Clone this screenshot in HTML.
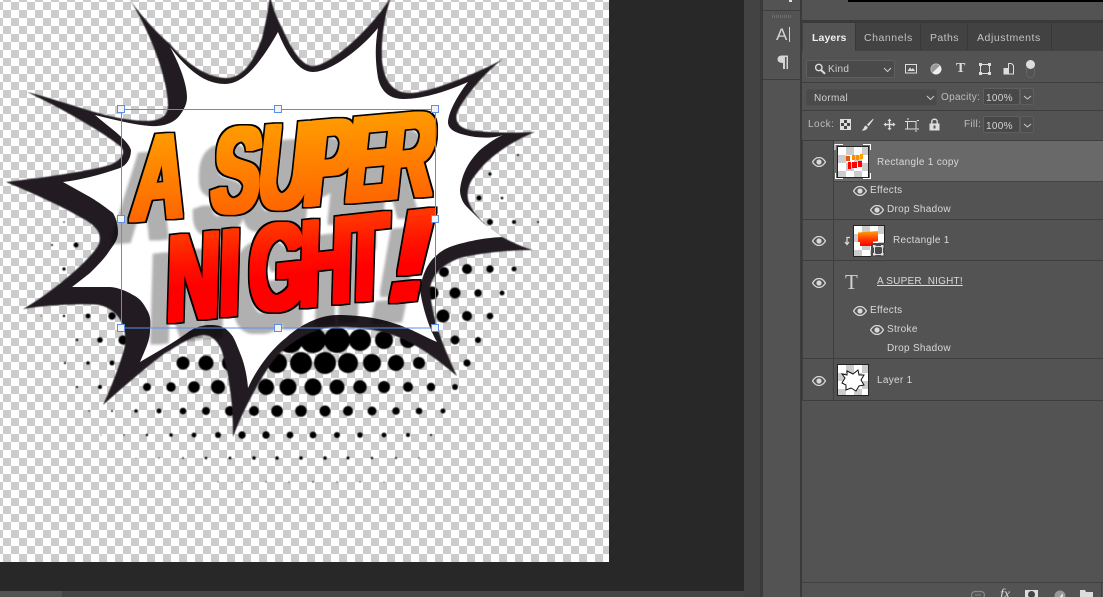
<!DOCTYPE html>
<html><head><meta charset="utf-8"><style>
html,body{margin:0;padding:0;width:1103px;height:597px;overflow:hidden;background:#282828}
body{position:relative;font-family:"Liberation Sans",sans-serif}
.a{position:absolute}
.t{position:absolute;font-size:10px;line-height:12px;letter-spacing:.3px;color:#d8d8d8;white-space:nowrap}
.tab{position:absolute;top:32px;font-size:10.5px;line-height:13px;letter-spacing:.55px;color:#c2c2c2;white-space:nowrap}
.hl{position:absolute;height:1px;background:#3e3e3e}
.box{position:absolute;background:#484848;border:1px solid #5e5e5e;box-sizing:border-box;border-radius:2px}
.chk{background-color:#fff;background-image:conic-gradient(#ccc 25%,#fff 25% 50%,#ccc 50% 75%,#fff 75%);background-size:16px 16px}
.th{position:absolute;border:1px solid #222;box-sizing:border-box}
.h{position:absolute;width:8px;height:8px;background:#f3f3f3;border:1px solid #5b8fe6;box-sizing:border-box}
svg{position:absolute;overflow:visible}
</style></head><body>
<div class="a" id="canvas" style="left:0;top:0;width:609px;height:562px;background-color:#fff;background-image:conic-gradient(#ccc 25%,#fff 25% 50%,#ccc 50% 75%,#fff 75%);background-size:16px 16px;background-position:3px 2px"></div>

<svg class="a" style="left:0;top:0" width="609" height="562" viewBox="0 0 609 562">
<defs>
<linearGradient id="g1" x1="0" y1="0" x2="0" y2="1"><stop offset="0" stop-color="#ffa800"/><stop offset="1" stop-color="#ff5500"/></linearGradient>
<linearGradient id="g2" x1="0" y1="0" x2="0" y2="1"><stop offset="0" stop-color="#ff5500"/><stop offset=".4" stop-color="#ff1000"/><stop offset=".55" stop-color="#ff0000"/><stop offset="1" stop-color="#ff0000"/></linearGradient>
<filter id="soft" x="-5%" y="-5%" width="110%" height="110%"><feGaussianBlur stdDeviation=".45"/></filter>
<filter id="fx" filterUnits="userSpaceOnUse" x="0" y="0" width="609" height="562" color-interpolation-filters="sRGB">
<feMorphology in="SourceGraphic" operator="dilate" radius="3.2 1.6" result="fat"/>
<feMorphology in="fat" operator="dilate" radius="1.3" result="d"/>
<feFlood flood-color="#000"/><feComposite in2="d" operator="in" result="outline"/>
<feOffset in="d" dx="-16" dy="20" result="o"/><feGaussianBlur in="o" stdDeviation="1.2" result="b"/>
<feFlood flood-color="#000" flood-opacity=".31"/><feComposite in2="b" operator="in" result="sh"/>
<feMerge><feMergeNode in="sh"/><feMergeNode in="outline"/><feMergeNode in="fat"/></feMerge>
</filter>
</defs>
<g fill="#000" filter="url(#soft)">
<circle cx="64" cy="222" r=".8"/><circle cx="52" cy="245" r="1"/><circle cx="76" cy="245" r="2.5"/><circle cx="64" cy="269" r="1.6"/>
<circle cx="41" cy="316" r=".5"/><circle cx="64" cy="316" r="1.2"/><circle cx="88" cy="316" r="2.4"/><circle cx="112" cy="316" r="3.7"/>
<circle cx="77" cy="340" r="1.2"/><circle cx="100" cy="340" r="2.8"/><circle cx="123" cy="340" r="4.6"/>
<circle cx="65" cy="363" r="1.1"/><circle cx="88" cy="363" r="1.7"/><circle cx="112" cy="363" r="2.5"/><circle cx="183" cy="363" r="6.5"/><circle cx="206" cy="363" r="7.5"/><circle cx="230" cy="363" r="8"/><circle cx="254" cy="363" r="9"/><circle cx="277" cy="363" r="10"/><circle cx="301" cy="363" r="11"/><circle cx="325" cy="363" r="11"/><circle cx="348" cy="363" r="10"/><circle cx="372" cy="363" r="9"/><circle cx="396" cy="363" r="8"/><circle cx="419" cy="363" r="6"/><circle cx="467" cy="363" r="3.6"/>
<circle cx="77" cy="387" r="1"/><circle cx="100" cy="387" r="2"/><circle cx="147" cy="387" r="4"/><circle cx="171" cy="387" r="4.7"/><circle cx="194" cy="387" r="5.8"/><circle cx="218" cy="387" r="7"/><circle cx="242" cy="387" r="7"/><circle cx="266" cy="387" r="8"/><circle cx="288" cy="387" r="8.5"/><circle cx="313" cy="387" r="8.5"/><circle cx="337" cy="387" r="7.5"/><circle cx="360" cy="387" r="6.7"/><circle cx="384" cy="387" r="6"/><circle cx="408" cy="387" r="5"/><circle cx="431" cy="387" r="4.2"/><circle cx="455" cy="387" r="3"/>
<circle cx="89" cy="411" r=".7"/><circle cx="112" cy="411" r="1"/><circle cx="136" cy="411" r="1.7"/><circle cx="159" cy="411" r="2.5"/><circle cx="183" cy="411" r="3.3"/><circle cx="206" cy="411" r="4"/><circle cx="230" cy="411" r="5"/><circle cx="254" cy="411" r="5"/><circle cx="277" cy="411" r="5.8"/><circle cx="301" cy="411" r="5.8"/><circle cx="325" cy="411" r="5.5"/><circle cx="348" cy="411" r="5"/><circle cx="372" cy="411" r="4.5"/><circle cx="396" cy="411" r="3.8"/><circle cx="419" cy="411" r="3.3"/><circle cx="443" cy="411" r="2.5"/>
<circle cx="101" cy="435" r=".5"/><circle cx="124" cy="435" r=".7"/><circle cx="147" cy="435" r="1.2"/><circle cx="171" cy="435" r="1.8"/><circle cx="194" cy="435" r="2.4"/><circle cx="218" cy="435" r="3"/><circle cx="242" cy="435" r="3.7"/><circle cx="266" cy="435" r="3.7"/><circle cx="290" cy="435" r="3.4"/><circle cx="313" cy="435" r="3.4"/><circle cx="337" cy="435" r="3"/><circle cx="360" cy="435" r="2.8"/><circle cx="384" cy="435" r="2.4"/><circle cx="408" cy="435" r="2"/><circle cx="431" cy="435" r="1"/>
<circle cx="136" cy="458" r=".4"/><circle cx="159" cy="458" r=".6"/><circle cx="183" cy="458" r=".9"/><circle cx="206" cy="458" r="1.3"/><circle cx="230" cy="458" r="1.4"/><circle cx="254" cy="458" r="1.8"/><circle cx="277" cy="458" r="1.8"/><circle cx="301" cy="458" r="1.8"/><circle cx="325" cy="458" r="1.8"/><circle cx="348" cy="458" r="1.5"/><circle cx="372" cy="458" r="1.2"/><circle cx="396" cy="458" r="1"/><circle cx="419" cy="458" r=".7"/>
<circle cx="194" cy="482" r=".4"/><circle cx="218" cy="482" r=".5"/><circle cx="242" cy="482" r=".5"/><circle cx="266" cy="482" r=".6"/><circle cx="289" cy="482" r=".6"/><circle cx="313" cy="482" r=".7"/><circle cx="337" cy="482" r=".6"/><circle cx="360" cy="482" r=".6"/><circle cx="384" cy="482" r=".5"/><circle cx="408" cy="482" r=".4"/>
<circle cx="290" cy="340" r="13"/><circle cx="313" cy="340" r="13"/><circle cx="337" cy="340" r="13"/><circle cx="360" cy="340" r="11"/><circle cx="384" cy="340" r="9"/><circle cx="408" cy="340" r="8"/><circle cx="431" cy="340" r="6.5"/><circle cx="455" cy="340" r="4.5"/><circle cx="478" cy="340" r="3"/>
<circle cx="443" cy="316" r="6.5"/><circle cx="467" cy="316" r="5"/><circle cx="490" cy="316" r="3.3"/>
<circle cx="432" cy="293" r="6.5"/><circle cx="455" cy="293" r="5.5"/><circle cx="478" cy="293" r="3.7"/><circle cx="502" cy="293" r="2.5"/>
<circle cx="444" cy="272" r="5"/><circle cx="467" cy="269" r="5"/><circle cx="490" cy="269" r="3.7"/><circle cx="514" cy="269" r="2.5"/>
<circle cx="490" cy="222" r="3"/><circle cx="514" cy="222" r="2"/><circle cx="538" cy="222" r="1"/><circle cx="479" cy="198" r="2.5"/><circle cx="502" cy="198" r="1.3"/><circle cx="490" cy="174" r="1.6"/><circle cx="518" cy="155" r="1"/>
</g>
<path filter="url(#soft)" fill="#231f20" d="M128,-3 C140,15 158,34 170,44 C185,62 205,77 225,78 C245,79 256,55 262,38 C266,22 268,10 270,-4 C274,12 278,20 283,30 C292,50 302,66 313,66 C330,66 370,30 391,-3 C384,18 381,40 382,60 C384,80 392,93 410,93 C430,93 480,72 503,59 C485,72 462,100 457,113 C454,124 462,130 477,131 C495,133 515,133 535,132 C515,140 490,155 477,173 C468,183 465,195 470,205 C476,218 495,235 502,237 C512,242 522,247 533,250 C510,250 480,253 460,258 C443,264 431,275 430,290 C432,320 445,350 457,376 C440,362 420,345 393,335 C375,329 355,327 337,327 C320,327 300,335 280,353 C265,368 243,410 233,437 C233,420 232,400 230,390 C228,370 222,350 220,347 C215,338 210,335 203,335 C190,336 175,348 165,353 C145,368 120,390 103,405 C110,390 122,360 125,345 C127,325 118,310 100,305 C85,303 45,305 23,309 C40,300 80,270 95,250 C105,238 100,227 80,217 C60,205 25,190 6,182 C40,178 85,172 110,165 C122,160 127,152 120,146 C100,130 55,105 27,92 C60,100 105,118 133,120 C150,122 168,122 168,105 C168,80 150,30 128,-3 Z"/>
<path fill="#fff" d="M170,47 C182,62 200,84 225,84 C245,84 262,60 278,32 C286,52 298,72 313,72 C330,72 360,50 378,28 C375,45 375,60 378,78 C381,92 390,99 403,99 C425,99 450,90 468,82 C458,95 448,112 448,123 C449,131 458,134 475,137 C485,138 495,138 503,135 C492,140 485,146 480,150 C470,160 462,172 460,190 C460,197 463,203 467,207 L483,223 L502,237 C485,238 475,240 463,243 C450,246 442,250 437,255 C428,262 422,275 420,290 C423,310 430,330 437,342 C425,337 410,328 393,323 C375,317 355,315 337,315 C320,315 300,325 287,337 C270,350 255,372 248,388 C247,375 244,362 240,353 C236,343 234,337 230,333 C224,326 218,325 210,325 C200,325 192,329 187,333 C170,345 155,353 140,362 C146,348 150,340 150,330 C151,320 150,315 147,310 C142,300 137,297 133,295 C125,290 115,287 110,287 L72,287 L90,273 C98,265 105,258 110,250 C116,242 118,238 118,232 C118,225 116,218 113,213 C105,207 100,203 90,197 L63,182 C80,180 100,175 120,168 C127,165 131,158 131,150 C128,140 110,128 95,115 C115,120 135,125 150,126 C165,127 175,122 180,115 C185,108 187,103 187,97 C187,85 180,65 170,47 Z"/>
<g filter="url(#fx)" font-family="'Liberation Sans',sans-serif" font-weight="700">
<text transform="translate(130,221) rotate(-5) skewX(-11) scale(.6,1)" font-size="120" fill="url(#g1)" x="0 90 132 210 287 357 417" y="0">A SUPER</text>
<text transform="translate(166,322) rotate(-6.4) skewX(-8) scale(.6,1)" font-size="122" fill="url(#g2)" x="0 88 138 222 295" y="0">NIGHT</text>
<text transform="translate(378,303) rotate(-6) skewX(-18) scale(1.25,1.04)" font-size="122" fill="url(#g2)" x="0" y="0">!</text>
</g>
<rect x="121.5" y="109.5" width="314" height="218.5" fill="none" stroke="#5b8fe6" stroke-width="1"/>
</svg>
<div class="h" style="left:117px;top:105px"></div><div class="h" style="left:274px;top:105px"></div><div class="h" style="left:431px;top:105px"></div>
<div class="h" style="left:117px;top:215px"></div><div class="h" style="left:431px;top:215px"></div>
<div class="h" style="left:117px;top:324px"></div><div class="h" style="left:274px;top:324px"></div><div class="h" style="left:431px;top:324px"></div>

<!-- bottom status -->
<div class="a" style="left:0;top:591px;width:744px;height:6px;background:#454545"></div>
<div class="a" style="left:0;top:591px;width:62px;height:6px;background:#535353"></div>

<!-- strips -->
<div class="a" style="left:744px;top:0;width:16px;height:597px;background:#434343"></div>
<div class="a" style="left:760px;top:0;width:42px;height:597px;background:#3a3a3a"></div>
<div class="a" style="left:763px;top:0;width:37px;height:597px;background:#535353"></div>
<div class="hl" style="left:763px;top:10px;width:37px"></div>
<div class="hl" style="left:763px;top:79px;width:37px"></div>
<div class="a" style="left:772px;top:15px;width:20px;height:3px;background:repeating-linear-gradient(90deg,#6e6e6e 0 1px,#535353 1px 2px)"></div>
<div class="a" style="left:789px;top:0;width:3px;height:2px;background:#ddd"></div>
<div class="t" style="left:776px;top:25px;font-size:17px;line-height:19px;letter-spacing:0;color:#d4d4d4">A</div>
<div class="a" style="left:789px;top:27px;width:1px;height:15px;background:#d4d4d4"></div>
<svg style="left:777px;top:55px" width="12" height="15"><path d="M5,0.5H11V14H9.5V2H8V14H6V8C2,8 .5,6.5 .5,4.3C.5,2 2,.5 5,.5Z" fill="#d4d4d4"/></svg>

<!-- panel -->
<div class="a" style="left:802px;top:0;width:301px;height:597px;background:#535353"></div>
<div class="a" style="left:848px;top:0;width:255px;height:2px;background:#000"></div>
<div class="a" style="left:802px;top:20px;width:301px;height:3px;background:#3a3a3a"></div>
<div class="a" style="left:802px;top:23px;width:301px;height:28px;background:#424242"></div>
<div class="a" style="left:803px;top:23px;width:52px;height:28px;background:#535353"></div>
<div class="a" style="left:920px;top:23px;width:1px;height:27px;background:#383838"></div>
<div class="a" style="left:967px;top:23px;width:1px;height:27px;background:#383838"></div>
<div class="a" style="left:1051px;top:23px;width:1px;height:27px;background:#383838"></div>
<div class="a" style="left:855px;top:23px;width:1px;height:27px;background:#383838"></div>
<div class="tab" style="left:812px;color:#f0f0f0;font-weight:700;letter-spacing:.1px">Layers</div>
<div class="tab" style="left:864px">Channels</div>
<div class="tab" style="left:930px;letter-spacing:.4px">Paths</div>
<div class="tab" style="left:977px">Adjustments</div>

<!-- filter row -->
<div class="box" style="left:806px;top:60px;width:89px;height:18px;background:#4a4a4a"></div>
<svg style="left:814px;top:63px" width="12" height="12"><circle cx="4.800" cy="4.500" r="3.200" fill="none" stroke="#ddd" stroke-width="1.400"/><path d="M7,7L11,10.800" stroke="#ddd" stroke-width="2"/></svg>
<div class="t" style="left:828px;top:64px;color:#d0d0d0">Kind</div>
<svg style="left:883px;top:67px" width="9" height="6"><path d="M1,1L4.5,4.5L8,1" fill="none" stroke="#ccc"/></svg>
<svg style="left:905px;top:63px" width="13" height="12"><rect x=".5" y="1.5" width="11" height="8.5" fill="none" stroke="#ddd"/><path d="M2.5,8L5,4.5L6.5,6.5L8,5L10,8Z" fill="#ddd"/></svg>
<svg style="left:930px;top:63px" width="13" height="12"><circle cx="6" cy="6" r="5.2" fill="#999" stroke="#ccc" stroke-width=".6"/><path d="M10,2.5A5.2,5.2 0 0 1 2.4,9.7Z" fill="#eee"/></svg>
<div class="t" style="left:956px;top:60px;font-family:'Liberation Serif',serif;font-weight:700;font-size:14px;line-height:18px;letter-spacing:0;color:#ddd">T</div>
<svg style="left:979px;top:63px" width="12" height="12"><rect x="1.5" y="1.5" width="9" height="9" fill="none" stroke="#ddd"/><g fill="#ddd"><rect x="0" y="0" width="3" height="3"/><rect x="9" y="0" width="3" height="3"/><rect x="0" y="9" width="3" height="3"/><rect x="9" y="9" width="3" height="3"/></g></svg>
<svg style="left:1003px;top:63px" width="12" height="12"><path d="M5.5,.5H8.5L10.5,2.5V11H5.5Z" fill="none" stroke="#ddd"/><rect x=".5" y="5" width="5.5" height="6.5" fill="#ddd"/></svg>
<div class="a" style="left:1026px;top:60px;width:9px;height:18px;box-sizing:border-box;border:1px solid #666;border-radius:5px"></div>
<div class="a" style="left:1026px;top:60px;width:9px;height:9px;border-radius:50%;background:#ddd"></div>
<div class="hl" style="left:802px;top:82px;width:301px"></div>

<!-- blend row -->
<div class="box" style="left:806px;top:89px;width:131px;height:17px;background:#4a4a4a;border-color:#4e4e4e"></div>
<div class="t" style="left:814px;top:93px;color:#d0d0d0">Normal</div>
<svg style="left:926px;top:95px" width="9" height="6"><path d="M1,1L4.5,4.5L8,1" fill="none" stroke="#ccc"/></svg>
<div class="t" style="left:941px;top:92px;color:#bdbdbd">Opacity:</div>
<div class="box" style="left:983px;top:88px;width:37px;height:17px"></div>
<div class="box" style="left:1020px;top:88px;width:14px;height:17px;background:#4e4e4e"></div>
<div class="t" style="left:986px;top:93px;color:#d4d4d4;letter-spacing:.3px">100%</div>
<svg style="left:1023px;top:95px" width="9" height="6"><path d="M1,1L4.5,4L8,1" fill="none" stroke="#ccc"/></svg>
<div class="hl" style="left:802px;top:110px;width:301px"></div>

<!-- lock row -->
<div class="t" style="left:808px;top:119px;color:#bdbdbd;letter-spacing:.5px">Lock:</div>
<div class="a" style="left:840px;top:119px;width:11px;height:11px;box-sizing:border-box;border:1px solid #ddd;background-color:#ddd;background-image:conic-gradient(#444 25%,#ddd 25% 50%,#444 50% 75%,#ddd 75%);background-size:6px 6px"></div>
<svg style="left:861px;top:118px" width="13" height="14"><path d="M12,.8L6,6.5L7.6,8.2L12.6,1.5ZM5,7.5C3,8 3,10 2.2,11L.8,12.6C3,13 6,12 6.8,9.2Z" fill="#ddd"/></svg>
<svg style="left:883px;top:118px" width="13" height="13"><path d="M6.5,.5L8.5,3H7.2V5.8H10V4.5L12.5,6.5L10,8.5V7.2H7.2V10H8.5L6.5,12.5L4.5,10H5.8V7.2H3V8.5L.5,6.5L3,4.5V5.8H5.8V3H4.5Z" fill="#ddd"/></svg>
<svg style="left:905px;top:118px" width="14" height="14"><rect x="2.5" y="3.5" width="8.5" height="7.5" fill="none" stroke="#ddd"/><path d="M0,3.5H2M11.5,11H14M3,0V2M11,12V14M12,2.5H14M0,11H2" stroke="#ddd"/></svg>
<svg style="left:929px;top:118px" width="11" height="13"><rect x=".5" y="5.5" width="10" height="7" fill="#ddd"/><path d="M2.8,5.5V3.5C2.8,.5 8.2,.5 8.2,3.5V5.5" fill="none" stroke="#ddd" stroke-width="1.4"/><rect x="4.5" y="7.5" width="2" height="3" fill="#555"/></svg>
<div class="t" style="left:964px;top:119px;color:#bdbdbd">Fill:</div>
<div class="box" style="left:983px;top:116px;width:37px;height:17px"></div>
<div class="box" style="left:1020px;top:116px;width:14px;height:17px;background:#4e4e4e"></div>
<div class="t" style="left:986px;top:121px;color:#d4d4d4;letter-spacing:.3px">100%</div>
<svg style="left:1023px;top:123px" width="9" height="6"><path d="M1,1L4.5,4L8,1" fill="none" stroke="#ccc"/></svg>
<div class="hl" style="left:802px;top:140px;width:301px"></div>

<!-- layers -->
<svg width="0" height="0"><defs><symbol id="eye" viewBox="0 0 14 10"><path d="M.5,5C3,1 5,.5 7,.5S11,1 13.5,5C11,9 9,9.5 7,9.5S3,9 .5,5Z" fill="none" stroke="#d8d8d8" stroke-width="1.3"/><circle cx="7" cy="5" r="2.6" fill="#d8d8d8"/></symbol></defs></svg>
<div class="a" style="left:834px;top:141px;width:269px;height:40px;background:#696969"></div>
<div class="a" style="left:802px;top:141px;width:1px;height:260px;background:#3e3e3e"></div>
<div class="a" style="left:833px;top:141px;width:1px;height:260px;background:#3e3e3e"></div>
<div class="hl" style="left:834px;top:181px;width:269px;background:#444"></div>
<div class="hl" style="left:803px;top:219px;width:300px"></div>
<div class="hl" style="left:803px;top:260px;width:300px"></div>
<div class="hl" style="left:803px;top:358px;width:300px"></div>
<div class="hl" style="left:803px;top:400px;width:300px"></div>

<svg style="left:812px;top:157px" width="14" height="10"><use href="#eye"/></svg>
<svg style="left:835px;top:144px" width="36" height="36"><path d="M0,6V.5H8M28,.5H35.5V6M35.5,29V34.5H28M8,34.5H.5V29" fill="none" stroke="#fff" stroke-width="1"/></svg>
<div class="th chk" style="left:837px;top:146px;width:32px;height:32px;border:1px solid #222"></div>
<svg style="left:838px;top:147px" width="30" height="30"><g fill="#ee5500"><rect x="8" y="9" width="4" height="5"/><rect x="14" y="8" width="3" height="5" fill="#ff8c00"/><rect x="18" y="8" width="3" height="5" fill="#ff8c00"/><rect x="22" y="7" width="3" height="5" fill="#ff9c00"/><rect x="10" y="15" width="3" height="7" fill="#f00"/><rect x="14" y="15" width="5" height="6" fill="#f00"/><rect x="20" y="14" width="4" height="6" fill="#f00"/></g></svg>
<div class="t" style="left:877px;top:157px">Rectangle 1 copy</div>
<svg style="left:853px;top:186px" width="14" height="10"><use href="#eye"/></svg>
<div class="t" style="left:870px;top:185px">Effects</div>
<svg style="left:870px;top:205px" width="14" height="10"><use href="#eye"/></svg>
<div class="t" style="left:887px;top:204px">Drop Shadow</div>

<svg style="left:812px;top:236px" width="14" height="10"><use href="#eye"/></svg>
<svg style="left:844px;top:236px" width="7" height="10"><path d="M6,1.5H3V8M1,6L3,8.5L5,6" fill="none" stroke="#ddd" stroke-width="1.2"/></svg>
<div class="th chk" style="left:853px;top:225px;width:32px;height:32px"></div>
<svg style="left:854px;top:226px" width="30" height="30"><defs><linearGradient id="g3" x1="0" y1="0" x2="0" y2="1"><stop offset="0" stop-color="#ffa500"/><stop offset=".6" stop-color="#ff3000"/><stop offset="1" stop-color="#f00"/></linearGradient></defs><path d="M4,6.5L24,5V15L19,15.500V20H6V16H4Z" fill="url(#g3)"/></svg>
<div class="a" style="left:871px;top:243px;width:14px;height:14px;background:#4a4a4a"></div>
<svg style="left:873px;top:245px" width="11" height="11"><rect x="1.500" y="1.500" width="8" height="8" fill="none" stroke="#ddd"/><g fill="#ddd"><rect width="2.500" height="2.500"/><rect x="8" width="2.500" height="2.500"/><rect y="8" width="2.500" height="2.500"/><rect x="8" y="8" width="2.500" height="2.500"/></g></svg>
<div class="t" style="left:893px;top:235px">Rectangle 1</div>

<svg style="left:812px;top:278px" width="14" height="10"><use href="#eye"/></svg>
<div class="t" style="left:845px;top:271px;font-family:'Liberation Serif',serif;font-size:21px;line-height:22px;letter-spacing:0;color:#d0d0d0">T</div>
<div class="t" style="left:877px;top:276px;text-decoration:underline;letter-spacing:.2px;white-space:pre">A SUPER  NIGHT!</div>
<svg style="left:853px;top:306px" width="14" height="10"><use href="#eye"/></svg>
<div class="t" style="left:870px;top:305px">Effects</div>
<svg style="left:870px;top:325px" width="14" height="10"><use href="#eye"/></svg>
<div class="t" style="left:887px;top:324px">Stroke</div>
<div class="t" style="left:887px;top:343px">Drop Shadow</div>

<svg style="left:812px;top:376px" width="14" height="10"><use href="#eye"/></svg>
<div class="th chk" style="left:837px;top:364px;width:32px;height:32px"></div>
<svg style="left:838px;top:365px" width="30" height="30"><path d="M9,6L15,9L20,5L21,10L26,10L23,15L26,20L21,21L18,26L13,23L8,25L8,20L4,18L7,13L4,9L9,10Z" fill="#fff" stroke="#111" stroke-width="1"/></svg>
<div class="t" style="left:877px;top:375px">Layer 1</div>

<!-- bottom bar -->
<div class="hl" style="left:802px;top:582px;width:301px;background:#404040"></div>
<div class="a" style="left:1101px;top:582px;width:1px;height:15px;background:#404040"></div>
<svg style="left:971px;top:591px" width="15" height="6"><rect x=".5" y=".5" width="13" height="7" rx="3.500" fill="none" stroke="#888" stroke-width="1.200"/><path d="M4,4H10" stroke="#888"/></svg>
<div class="t" style="left:1000px;top:587px;font-family:'Liberation Serif',serif;font-style:italic;font-size:14px;line-height:15px;letter-spacing:0;color:#ddd">fx</div>
<div class="a" style="left:1025px;top:590px;width:13px;height:7px;background:#ddd"></div>
<div class="a" style="left:1028px;top:591px;width:7px;height:7px;border-radius:50%;background:#444"></div>
<svg style="left:1054px;top:590px" width="12" height="7"><circle cx="6" cy="6" r="5.500" fill="#999"/><path d="M10,2A5.500,5.500 0 0 0 3,8Z" fill="#eee" transform="rotate(170 6 6)"/></svg>
<svg style="left:1080px;top:589px" width="14" height="8"><path d="M0,1H5L6,3H13V8H0Z" fill="#ddd"/></svg>
</body></html>
